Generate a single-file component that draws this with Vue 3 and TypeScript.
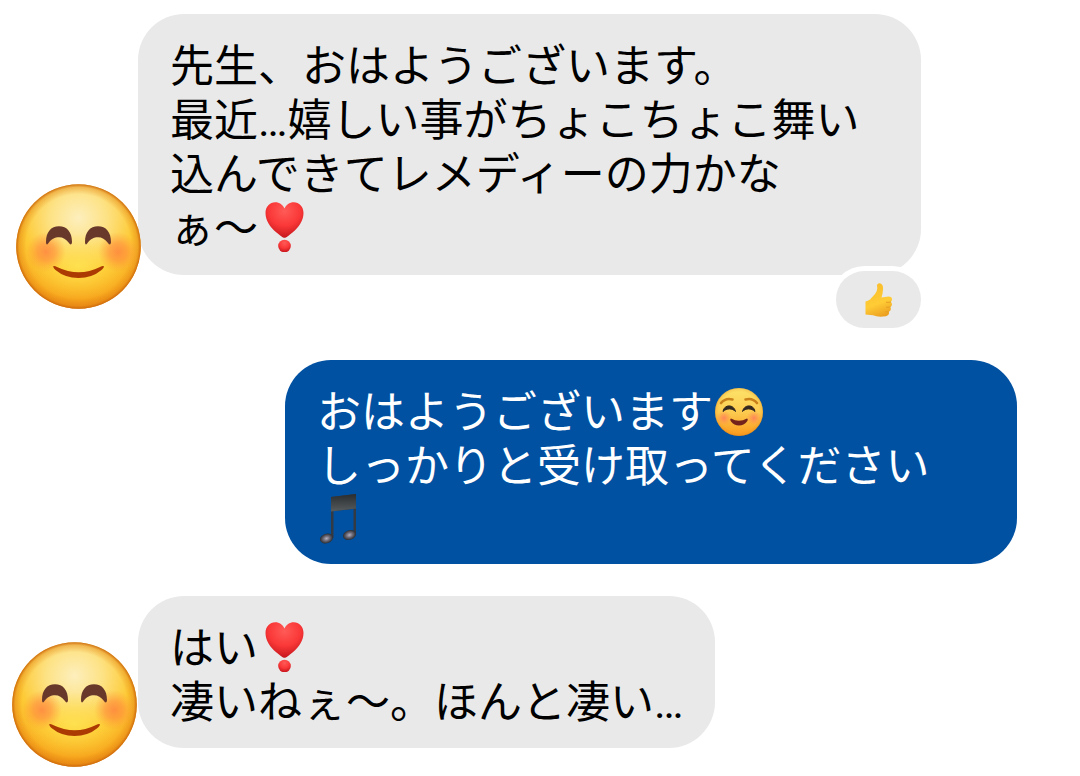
<script setup lang="ts">
type Part = { kind: 'text' | 'emoji'; value: string }
interface Message {
  id: number
  own: boolean
  lines: Part[][]
  reaction?: string
}

const text = (value: string): Part => ({ kind: 'text', value })
const emoji = (value: string): Part => ({ kind: 'emoji', value })

const messages: Message[] = [
  {
    id: 1,
    own: false,
    lines: [
      [text('先生、おはようございます。')],
      [text('最近…嬉しい事がちょこちょこ舞い')],
      [text('込んできてレメディーの力かな')],
      [text('ぁ〜'), emoji('heart')],
    ],
    reaction: 'thumb',
  },
  {
    id: 2,
    own: true,
    lines: [
      [text('おはようございます'), emoji('smile')],
      [text('しっかりと受け取ってください')],
      [emoji('note')],
    ],
  },
  {
    id: 3,
    own: false,
    lines: [[text('はい'), emoji('heart')], [text('凄いねぇ〜。ほんと凄い…')]],
  },
]

const labels: Record<string, string> = {
  heart: 'ハートの感嘆符',
  smile: '笑顔',
  note: '音符',
  thumb: 'いいね',
}
</script>

<template>
  <svg class="defs" aria-hidden="true">
    <defs>
      <radialGradient id="faceFill" cx="0.5" cy="0.27" r="0.75">
        <stop offset="0" stop-color="#fdefbd" />
        <stop offset="0.3" stop-color="#fde285" />
        <stop offset="0.6" stop-color="#fdca35" />
        <stop offset="0.85" stop-color="#f8ab20" />
        <stop offset="1" stop-color="#ea850f" />
      </radialGradient>
      <radialGradient id="faceGlow">
        <stop offset="0" stop-color="#ffe44f" stop-opacity="0.8" />
        <stop offset="1" stop-color="#ffd83d" stop-opacity="0" />
      </radialGradient>
      <radialGradient id="faceRim">
        <stop offset="0.84" stop-color="#e37c10" stop-opacity="0" />
        <stop offset="0.95" stop-color="#df7d12" stop-opacity="0.4" />
        <stop offset="1" stop-color="#c9650a" stop-opacity="0.95" />
      </radialGradient>
      <radialGradient id="cheek">
        <stop offset="0" stop-color="#ff8040" stop-opacity="0.8" />
        <stop offset="0.45" stop-color="#ff8a3d" stop-opacity="0.6" />
        <stop offset="1" stop-color="#ff9c38" stop-opacity="0" />
      </radialGradient>
      <radialGradient id="heartFill" cx="0.5" cy="0.25" r="0.75">
        <stop offset="0" stop-color="#ff5b57" />
        <stop offset="0.55" stop-color="#fa3838" />
        <stop offset="1" stop-color="#c5161d" />
      </radialGradient>
      <linearGradient id="smileFill" x1="0" y1="0" x2="0" y2="1">
        <stop offset="0" stop-color="#fde36a" />
        <stop offset="0.5" stop-color="#fccb50" />
        <stop offset="1" stop-color="#fb9a1c" />
      </linearGradient>
      <radialGradient id="smileCheek">
        <stop offset="0" stop-color="#ff7a5c" stop-opacity="0.85" />
        <stop offset="1" stop-color="#ff8f50" stop-opacity="0" />
      </radialGradient>
      <linearGradient id="beam" x1="0" y1="0" x2="0" y2="1">
        <stop offset="0" stop-color="#292d30" />
        <stop offset="1" stop-color="#565b5d" />
      </linearGradient>
      <radialGradient id="noteHead">
        <stop offset="0" stop-color="#b4b0c2" />
        <stop offset="0.5" stop-color="#6a6774" />
        <stop offset="1" stop-color="#292b31" />
      </radialGradient>
      <linearGradient id="thumbFill" x1="0.3" y1="0" x2="0.6" y2="1">
        <stop offset="0" stop-color="#f9bd2b" />
        <stop offset="0.6" stop-color="#ffcc36" />
        <stop offset="1" stop-color="#eca020" />
      </linearGradient>
    </defs>

    <symbol id="avatar" viewBox="0 0 125 125">
      <circle cx="62.5" cy="62.5" r="62.3" fill="url(#faceFill)" />
      <ellipse cx="62" cy="82" rx="46" ry="32" fill="url(#faceGlow)" />
      <circle cx="62.5" cy="62.5" r="62.3" fill="url(#faceRim)" />
      <circle cx="30" cy="68" r="20" fill="url(#cheek)" />
      <circle cx="102" cy="68" r="20" fill="url(#cheek)" />
      <path d="M30 58C30 48 35 42.200 43 42.200S56 48 56 58C56 61 54 61 53 59C50 55 47 53.200 43 53.200S35 55 32.500 59C31.500 61 30 61 30 58Z" fill="#68382a" />
      <path d="M69 58C69 48 74 42.200 82 42.200S95 48 95 58C95 61 93 61 92 59C89 55 86 53.200 82 53.200S74 55 71.500 59C70.500 61 69 61 69 58Z" fill="#68382a" />
      <path d="M37.500 82Q38.500 81.500 41 83Q63 93.500 84 83Q86.500 81.500 87.700 82Q88.500 83.500 85.500 86Q76 94 62.500 94Q49 94 39.500 86Q36.500 83 37.500 82Z" fill="#ac3a03" />
    </symbol>

    <symbol id="heart" viewBox="0 0 50 50">
      <path d="M26.500 35.800C25 35.800 22 33.500 18.500 30.500C12 25 7.500 18.500 7.500 11C7.500 4.500 12 .2 17.200 .2C21.500 .2 25 2.800 26.500 6.500C28 2.800 31.500 .2 35.800 .2C41 .2 45.500 4.500 45.500 11C45.500 18.500 41 25 34.500 30.500C31 33.500 28 35.800 26.500 35.800Z" fill="url(#heartFill)" />
      <circle cx="26.500" cy="44" r="6.300" fill="url(#heartFill)" />
    </symbol>

    <symbol id="smile" viewBox="0 0 50 50">
      <circle cx="26" cy="26" r="24" fill="url(#smileFill)" />
      <circle cx="26" cy="26" r="24" fill="url(#faceRim)" opacity="0.4" />
      <circle cx="11" cy="32" r="7.500" fill="url(#smileCheek)" />
      <circle cx="41" cy="32" r="7.500" fill="url(#smileCheek)" />
      <path d="M8 17Q12.500 11.500 19.500 13.500M32.500 13.500Q39.500 11.500 44 17" fill="none" stroke="#c9821b" stroke-width="2.600" stroke-linecap="round" />
      <path d="M10 25.500C11 18 21 18 22.500 25.500C19.500 22 13.500 22 10 25.500ZM29.500 25.500C31 18 41 18 42 25.500C38.500 22 32.500 22 29.500 25.500Z" fill="#33281f" stroke="#33281f" stroke-linejoin="round" />
      <path d="M18 32.500Q26 37 34 32.500Q35.500 33 34 35.500Q31 39.500 26 39.500T18 35.500Q16.500 33 18 32.500Z" fill="#73231b" />
    </symbol>

    <symbol id="note" viewBox="0 0 50 50">
      <path d="M14 3L39 0V40H36.500V15L16.500 17V44H14Z" fill="#343a42" />
      <path d="M14 3L39 0V14.500L14 17.500Z" fill="url(#beam)" />
      <ellipse cx="9.500" cy="44.500" rx="6.700" ry="4.800" transform="rotate(-18 9.500 44.500)" fill="url(#noteHead)" />
      <ellipse cx="32.500" cy="41" rx="6.700" ry="4.800" transform="rotate(-18 32.500 41)" fill="url(#noteHead)" />
    </symbol>

    <symbol id="thumb" viewBox="0 0 34 34">
      <path d="M3.500 18.500Q6 18 8 16.500L13 11Q16 7.500 15 3Q15 .3 17.500 .3Q21.500 1 21 6.500Q20.800 10.500 19.500 14.500L26.500 13.500Q30 13.500 30 16.300Q30 18 28.800 19Q30.500 20.300 29.700 22.500Q29.200 23.600 28.300 23.900Q29.500 25.800 28.200 27.800Q27.700 28.500 26.800 28.800Q28 32 24 33.200Q16 34.500 11 32.200L3.500 31.500Z" fill="url(#thumbFill)" />
      <path d="M24 19.200Q26 19.800 28.800 19M24 24Q26 24.700 28.300 23.900M23.500 28.700Q25 29.200 26.800 28.800" fill="none" stroke="#e29b22" stroke-width="0.900" />
    </symbol>
  </svg>

  <main class="chat" lang="ja">
    <article
      v-for="message in messages"
      :key="message.id"
      class="row"
      :class="{ own: message.own, reacted: message.reaction }"
    >
      <svg v-if="!message.own" class="avatar" role="img" aria-label="笑顔のアイコン">
        <use href="#avatar" />
      </svg>
      <div class="body">
        <p class="bubble">
          <span v-for="(line, i) in message.lines" :key="i" class="line"><template v-for="(part, j) in line" :key="j"><template v-if="part.kind === 'text'">{{ part.value }}</template><svg v-else class="emoji" role="img" :aria-label="labels[part.value]"><use :href="'#' + part.value" /></svg></template></span>
        </p>
        <button v-if="message.reaction" class="reaction" type="button" :aria-label="labels[message.reaction]">
          <svg class="thumb" aria-hidden="true"><use :href="'#' + message.reaction" /></svg>
        </button>
      </div>
    </article>
  </main>
</template>

<style>
body {
  background: #fff;
}
</style>

<style scoped>
.defs {
  position: absolute;
  width: 0;
  height: 0;
}

.chat {
  display: flex;
  flex-direction: column;
  gap: 32px;
  padding: 14px 0 28px;
  font-family: Roboto, "Noto Sans CJK JP", sans-serif;
  font-size: 44px;
  line-height: 54px;
  color: #000;
}

.row {
  display: grid;
  grid-template-columns: 138px minmax(0, 1fr);
  padding-right: 159px;
}

.row.own {
  grid-template-columns: minmax(0, 1fr);
  padding: 0 63px 0 285px;
}

.avatar {
  position: relative;
  z-index: 1;
  align-self: end;
  width: 125px;
  height: 125px;
  margin: 0 0 -19px 12px;
}

.reacted .avatar {
  margin: 0 0 19px 16px;
}

.body {
  display: flex;
  flex-direction: column;
  align-items: flex-start;
}

.bubble {
  box-sizing: border-box;
  margin: 0;
  padding: 26px 32px 18px;
  border-radius: 46px;
  background: #e9e9e9;
}

.reacted .bubble,
.own .bubble {
  width: 100%;
}

.own .bubble {
  background: #0051a2;
  color: #fff;
}

.reacted .bubble,
.own .bubble {
  padding-bottom: 16px;
}

.reacted .bubble {
  padding-bottom: 19px;
}

.line {
  display: block;
}

.emoji {
  width: 50px;
  height: 50px;
  vertical-align: -8px;
}

.reaction {
  display: flex;
  align-items: center;
  justify-content: center;
  align-self: flex-end;
  width: 85px;
  height: 57px;
  margin-top: -4px;
  padding: 0;
  border: 0;
  border-radius: 29px;
  background: #e9e9e9;
  box-shadow: 0 0 0 5px #fff;
}

.thumb {
  width: 34px;
  height: 34px;
}
</style>
